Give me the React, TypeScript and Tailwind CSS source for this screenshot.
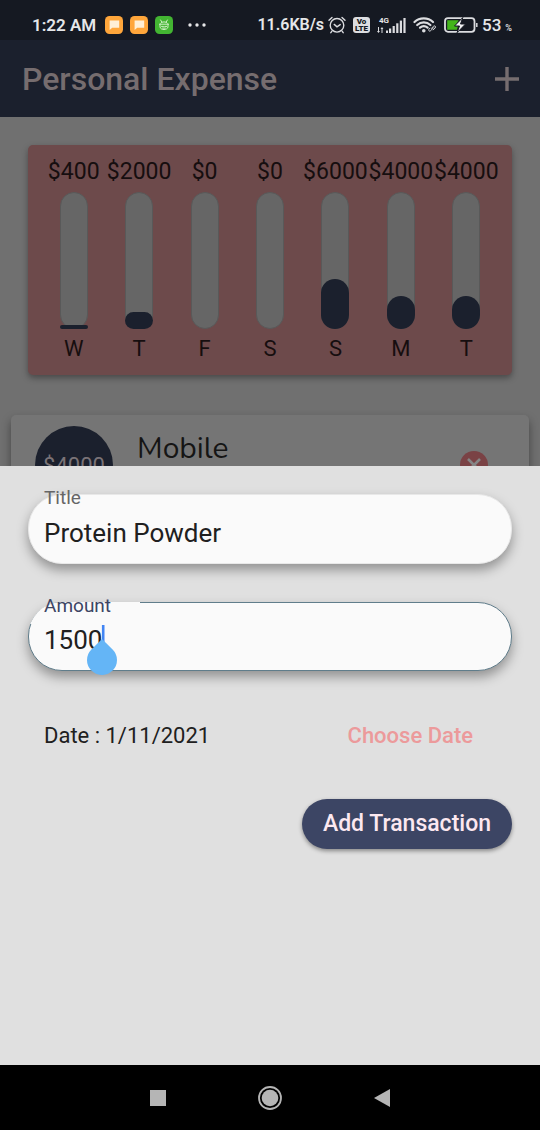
import { useState } from "react";

const days = [
  { day: "W", amount: 400, fill: "3%" },
  { day: "T", amount: 2000, fill: "12.5%" },
  { day: "F", amount: 0, fill: "0%" },
  { day: "S", amount: 0, fill: "0%" },
  { day: "S", amount: 6000, fill: "37%" },
  { day: "M", amount: 4000, fill: "24.5%" },
  { day: "T", amount: 4000, fill: "24.5%" },
];

function NoteBadge() {
  return (
    <svg className="size-[18px]" viewBox="0 0 18 18" aria-hidden="true">
      <rect width="18" height="18" rx="4.5" fill="#ffa63b" />
      <path d="M4.6 4.6h9.6v7.2H7.2l-2.6 2.2z" fill="#ffefd6" />
    </svg>
  );
}

function RobotBadge() {
  return (
    <svg className="size-[18px]" viewBox="0 0 18 18" aria-hidden="true">
      <rect width="18" height="18" rx="4.5" fill="#43b532" />
      <g fill="none" stroke="#dff5d6" strokeWidth="0.9" strokeLinecap="round">
        <path d="M5.6 7.2C6.6 5.4 11.4 5.4 12.4 7.2M5.6 4l1.2 1.9M12.4 4l-1.2 1.9M4.4 8.2h9.2M5 8.5v2.3c0 3.6 8 3.6 8 0V8.5M6.5 10.4h2M9.7 10.4h2M7.6 12.1h2.8" />
      </g>
    </svg>
  );
}

function AlarmIcon() {
  return (
    <svg className="size-[18px]" viewBox="0 0 18 18" fill="none" stroke="#dcdde0" strokeWidth="1.4" strokeLinecap="round" aria-hidden="true">
      <circle cx="9" cy="9.3" r="6.8" />
      <path d="M1 4.2 4 1.4M17 4.2 14 1.4M6.2 8.4 9 10.8l3.2-2.2M3.8 15.3l-1 1.4M14.2 15.3l1 1.4" />
    </svg>
  );
}

function VolteIcon() {
  return (
    <span className="flex h-4 w-[17px] flex-col items-center justify-center rounded-[3px] bg-[#dcdde0] text-[8px] leading-[7px] font-black text-[#151922]">
      <span>Vo</span>
      <span>LTE</span>
    </span>
  );
}

function SignalIcon() {
  return (
    <span className="flex flex-col">
      <span className="pl-[2px] text-[8px] leading-[7px] font-bold">4G</span>
      <svg className="-mt-[6px] h-[15px] w-[29px]" viewBox="0 0 29 15" fill="#dcdde0" aria-hidden="true">
        <path d="M1 9h1v4h1l-1.6 2L0 13h1zM4.5 15v-4h-1L5 9l1.4 2h-.9v4z" />
        <rect x="9" y="12.5" width="2" height="2.5" />
        <rect x="12" y="10.5" width="2.2" height="4.5" />
        <rect x="15.6" y="8" width="2.2" height="7" />
        <rect x="19.2" y="5.3" width="2.2" height="9.7" />
        <rect x="22.8" y="2.6" width="2.2" height="12.4" />
        <rect x="26.4" y="0" width="2.2" height="15" />
      </svg>
    </span>
  );
}

function WifiIcon() {
  return (
    <svg className="h-4 w-6" viewBox="0 0 24 16" fill="none" stroke="#dcdde0" strokeLinecap="round" aria-hidden="true">
      <path d="M1.5 5C6.5.2 15 .2 20 5" strokeWidth="2.2" />
      <path d="M4.2 8c3.8-3.4 9.4-3.4 13.2 0" strokeWidth="2.2" />
      <path d="M7 10.7c2.4-2 5.2-2 7.6 0" strokeWidth="2.2" />
      <circle cx="10.8" cy="13.7" r="1.8" fill="#dcdde0" stroke="none" />
      <path d="M18.5 11.3l2-2c1.2-1.2 2.8.4 1.7 1.6l-2 2M20.5 10.7l-2.8 3c-1.2 1.2-2.8-.4-1.6-1.6l1-1" strokeWidth="1" />
    </svg>
  );
}

function BatteryIcon() {
  return (
    <svg className="h-4 w-[34px]" viewBox="0 0 34 16" fill="none" aria-hidden="true">
      <rect x="1" y="1.2" width="29.5" height="13.6" rx="3" stroke="#dcdde0" strokeWidth="1.8" />
      <path d="M3.2 3.3h11.5l-4 6h3.2l-1 3.5H3.2z" fill="#43b51b" />
      <path d="M18.8.5 10.5 9h5l-2.4 6.7L21.5 7h-5z" fill="#f2f3f4" stroke="#151922" strokeWidth="1" />
      <path d="M32.8 6v4" stroke="#dcdde0" strokeWidth="1.5" />
    </svg>
  );
}

function StatusBar() {
  return (
    <div className="flex h-10 items-center justify-between bg-[#151922] pt-[9px] pr-7 pl-8 text-[#e6e7e9]">
      <div className="flex items-center gap-[7px]">
        <span className="mr-[2px] text-[17px] leading-5 font-semibold">1:22 AM</span>
        <NoteBadge />
        <NoteBadge />
        <RobotBadge />
        <svg className="ml-2 h-1 w-[18px]" viewBox="0 0 18 4" fill="#e6e7e9" aria-hidden="true">
          <circle cx="2" cy="2" r="1.7" />
          <circle cx="9" cy="2" r="1.7" />
          <circle cx="16" cy="2" r="1.7" />
        </svg>
      </div>
      <div className="flex items-center gap-[7px]">
        <span className="flex items-center gap-1">
          <span className="text-[16px] leading-5 font-semibold">11.6KB/s</span>
          <AlarmIcon />
        </span>
        <VolteIcon />
        <SignalIcon />
        <WifiIcon />
        <span className="flex items-center gap-1">
          <BatteryIcon />
          <span className="flex items-baseline gap-1 text-[17px] leading-5 font-medium">
            53 <span className="text-[9px] leading-3">%</span>
          </span>
        </span>
      </div>
    </div>
  );
}

function Chart() {
  return (
    <section className="mx-7 mt-7 grid grid-cols-7 rounded-[5px] bg-[#6d4a4b] px-[13px] pt-[14px] pb-[13px] shadow-[0_3px_6px_rgba(0,0,0,0.35)]">
      {days.map((d, i) => (
        <div key={i} className="flex min-w-0 flex-col items-center text-[23px] leading-[26px] text-[#160e0f]">
          <span className="whitespace-nowrap">${d.amount}</span>
          <div className="mt-[7px] flex h-[137px] w-7 flex-col justify-end rounded-[14px] border border-[#595959] bg-[#666666]">
            <div className="-mx-px -mb-px rounded-[14px] bg-[#1b202d]" style={{ height: d.fill }} />
          </div>
          <span className="mt-[7px] text-[22px]">{d.day}</span>
        </div>
      ))}
    </section>
  );
}

function TransactionRow() {
  return (
    <article className="mx-[11px] mt-10 flex items-start rounded-[5px] bg-[#757575] px-6 pt-[11px] pb-6 shadow-[0_5px_10px_rgba(0,0,0,0.4)]">
      <div className="flex size-[78px] items-center justify-center rounded-full bg-[#1b202d] text-[22px] text-[#7a7377]">$4000</div>
      <h2 className="ml-6 pt-[3px] font-[Nunito,'Noto_Sans',sans-serif] text-[30px] leading-10 text-[#151515]">Mobile</h2>
      <button type="button" aria-label="Delete Mobile" className="mt-[25px] mr-[17px] ml-auto size-7">
        <svg viewBox="0 0 28 28" aria-hidden="true">
          <circle cx="14" cy="14" r="14" fill="#7a4245" />
          <path d="M8 8l12 12M20 8 8 20" stroke="#858585" strokeWidth="2.6" />
        </svg>
      </button>
    </article>
  );
}

function TransactionSheet() {
  const [title, setTitle] = useState("Protein Powder");
  const [amount, setAmount] = useState("1500");
  return (
    <form className="absolute inset-x-0 bottom-0 bg-[#e0e0e0] px-7 pt-7 pb-[216px]" onSubmit={(e) => e.preventDefault()}>
      <div className="flex h-[70px] flex-col rounded-[34px] border border-[#e8e8e8] bg-[#fafafa] px-[15px] shadow-[0_6px_12px_rgba(0,0,0,0.35)]">
        <label htmlFor="title" className="-mt-2 self-start text-[19px] leading-[22px] text-[#666666]">Title</label>
        <input id="title" className="mt-[8px] w-full bg-transparent text-[26px] leading-8 text-[#202020] outline-none" value={title} onChange={(e) => setTitle(e.target.value)} />
      </div>
      <div className="relative mt-[38px] flex h-[69px] flex-col rounded-[34px] border border-[#607d8b] bg-[#fafafa] px-[15px] shadow-[0_6px_12px_rgba(0,0,0,0.35)]">
        <span className="absolute -top-px -left-px h-[22px] w-28 overflow-hidden">
          <span className="block h-[68px] w-56 rounded-[34px] bg-[#fafafa]" />
        </span>
        <label htmlFor="amount" className="relative -mt-2 self-start text-[19px] leading-[22px] text-[#3c4564]">Amount</label>
        <input id="amount" inputMode="numeric" className="relative mt-[7px] w-full bg-transparent text-[26px] leading-8 text-[#202020] outline-none" value={amount} onChange={(e) => setAmount(e.target.value)} />
        <svg className="pointer-events-none absolute top-[22px] left-[58px] h-[50px] w-[30px]" viewBox="0 0 30 50" aria-hidden="true">
          <path d="M16.2 0v20" stroke="#4285f4" strokeWidth="2.6" />
          <path d="M15 14 25.6 24.4a15 15 0 1 1-21.2 0z" fill="#64b5f6" />
        </svg>
      </div>
      <div className="mt-[51px] flex items-center justify-between pr-[39px] pl-4 text-[22px] leading-7">
        <span className="text-[#202020]">Date : 1/11/2021</span>
        <button type="button" className="font-medium text-[#ec9a9b]">Choose Date</button>
      </div>
      <div className="mt-[49px] flex justify-end">
        <button type="submit" className="h-[50px] rounded-full bg-[#3c4564] px-[21px] text-[23px] font-medium text-[#fce8f0] shadow-[0_2px_4px_rgba(0,0,0,0.4)]">Add Transaction</button>
      </div>
    </form>
  );
}

export default function App() {
  return (
    <div className="flex min-h-screen flex-col bg-[#707070] font-[Roboto,sans-serif]">
      <StatusBar />
      <header className="flex h-[77px] items-center justify-between bg-[#1b202d] pr-5 pl-[22px] text-[#766d6f]">
        <h1 className="text-[32px] leading-10 font-medium">Personal Expense</h1>
        <button type="button" aria-label="Add expense">
          <svg className="size-[26px]" viewBox="0 0 26 26" fill="none" stroke="currentColor" strokeWidth="3.4" aria-hidden="true">
            <path d="M13 1v24M1 13h24" />
          </svg>
        </button>
      </header>
      <main className="relative flex grow flex-col overflow-hidden">
        <Chart />
        <TransactionRow />
        <TransactionSheet />
      </main>
      <nav className="flex h-[65px] items-center justify-center gap-[88px] bg-black">
        <button type="button" aria-label="Recent apps">
          <svg className="size-6" viewBox="0 0 24 24" aria-hidden="true">
            <rect x="4" y="4" width="16" height="16" fill="#b5b5b5" />
          </svg>
        </button>
        <button type="button" aria-label="Home">
          <svg className="size-6" viewBox="0 0 24 24" aria-hidden="true">
            <circle cx="12" cy="12" r="11" fill="none" stroke="#b5b5b5" strokeWidth="1.8" />
            <circle cx="12" cy="12" r="8.3" fill="#b5b5b5" />
          </svg>
        </button>
        <button type="button" aria-label="Back">
          <svg className="size-6" viewBox="0 0 24 24" aria-hidden="true">
            <path d="M4 12 20 3v18z" fill="#b5b5b5" />
          </svg>
        </button>
      </nav>
    </div>
  );
}
